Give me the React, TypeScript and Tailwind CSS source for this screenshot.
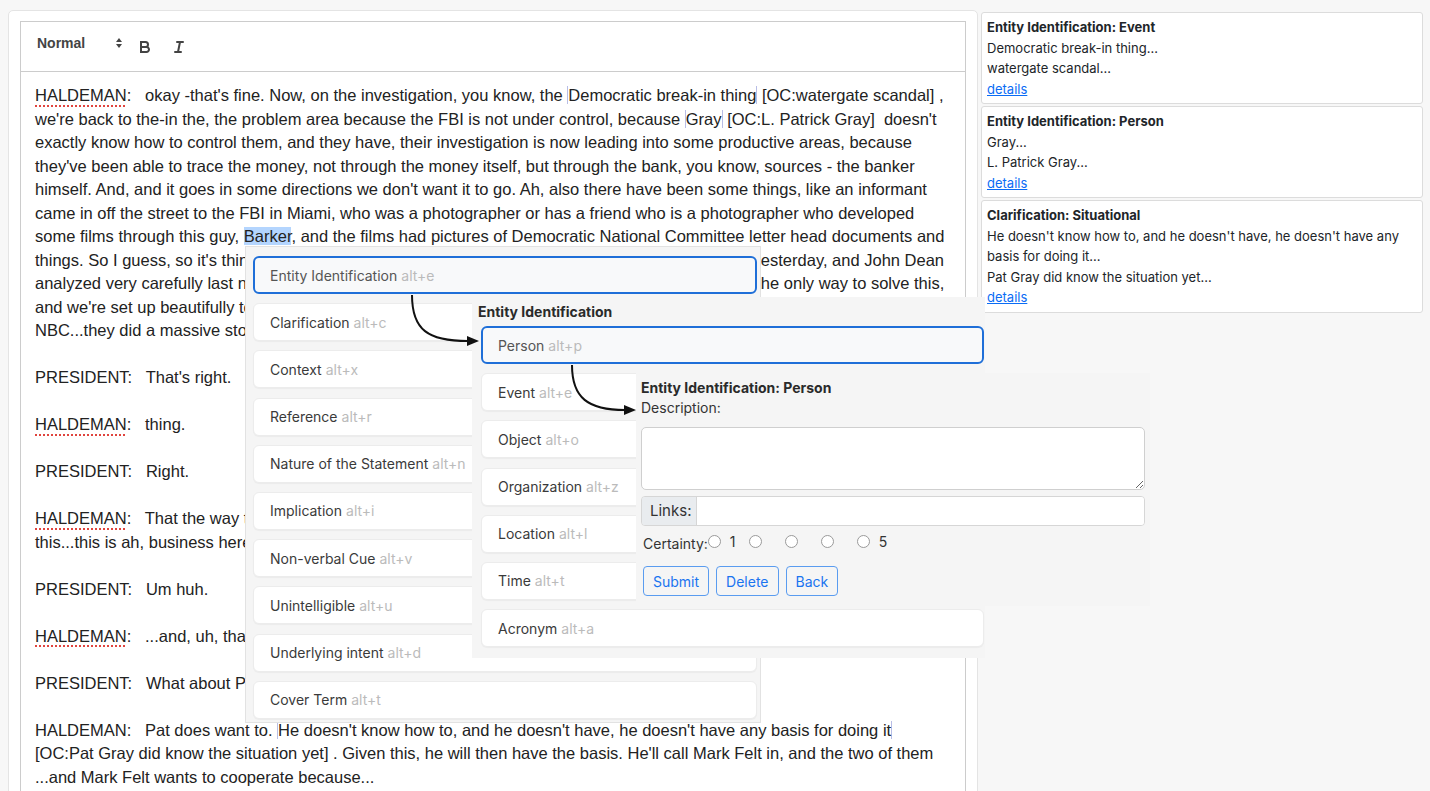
import React from "react";

const editorFont = { fontFamily: '"Liberation Sans", Arial, Helvetica, sans-serif' };
const uiFont = { fontFamily: 'Inter, "Noto Sans", "Liberation Sans", sans-serif' };

function Mark({ children }: { children: React.ReactNode }) {
  return <span className="border-x border-[#b8bde6]">{children}</span>;
}

function Speaker({ name }: { name: string }) {
  if (name === "HALDEMAN") {
    return (
      <>
        <span className="underline decoration-dotted decoration-[#e0443e] decoration-[1.5px] underline-offset-[4px]">
          HALDEMAN
        </span>
        {":   "}
      </>
    );
  }
  return <>{name + ":   "}</>;
}

const topMenu = [
  ["Entity Identification", "alt+e"],
  ["Clarification", "alt+c"],
  ["Context", "alt+x"],
  ["Reference", "alt+r"],
  ["Nature of the Statement", "alt+n"],
  ["Implication", "alt+i"],
  ["Non-verbal Cue", "alt+v"],
  ["Unintelligible", "alt+u"],
  ["Underlying intent", "alt+d"],
  ["Cover Term", "alt+t"],
];

const subMenu = [
  ["Person", "alt+p"],
  ["Event", "alt+e"],
  ["Object", "alt+o"],
  ["Organization", "alt+z"],
  ["Location", "alt+l"],
  ["Time", "alt+t"],
  ["Acronym", "alt+a"],
];

const notes = [
  {
    title: "Entity Identification: Event",
    lines: ["Democratic break-in thing...", "watergate scandal..."],
  },
  {
    title: "Entity Identification: Person",
    lines: ["Gray...", "L. Patrick Gray..."],
  },
  {
    title: "Clarification: Situational",
    lines: [
      "He doesn't know how to, and he doesn't have, he doesn't have any basis for doing it...",
      "Pat Gray did know the situation yet...",
    ],
  },
];

function MenuItem({ label, keys, active }: { label: string; keys: string; active?: boolean }) {
  return (
    <div
      className={`h-[38px] flex items-center rounded-[6px] text-[14px] ${
        active
          ? "border-2 border-[#1f6fd8] bg-[#f8f9fa] pl-[15px] text-[#555]"
          : "border border-[#ececec] bg-white pl-[16px] text-[#3a3a3a] shadow-[0_1px_1px_rgba(0,0,0,0.04)]"
      }`}
    >
      <span>{label}</span>
      <span className="ml-[4px] text-[#bbb]">{keys}</span>
    </div>
  );
}

export default function App() {
  return (
    <div className="relative h-screen w-full overflow-hidden bg-[#f7f7f7] flex items-start gap-[3px]">
      {/* editor card */}
      <div className="ml-2 mt-[10px] w-[970px] shrink-0 bg-white border border-[#e4e4e4] rounded-[5px] pt-[10px] px-[11px] pb-6">
        <div className="h-[51px] border border-[#ccc] flex items-center pl-[16px] text-[#444]" style={editorFont}>
          <span className="w-[77px] text-[14px] font-semibold mb-[7px]">Normal</span>
          <svg width="10" height="14" viewBox="0 0 10 14" className="mb-[7px]">
            <polygon points="2,6 5,2 8,6" fill="#444" />
            <polygon points="2,8 5,12 8,8" fill="#444" />
          </svg>
          <svg width="18" height="18" viewBox="0 0 18 18" className="ml-[12px]" fill="none" stroke="#444" strokeWidth="2">
            <path d="M5,4H9.5A2.5,2.5,0,0,1,12,6.5v0A2.5,2.5,0,0,1,9.5,9H5V4Z" />
            <path d="M5,9h5.5A2.5,2.5,0,0,1,13,11.5v0A2.5,2.5,0,0,1,10.5,14H5V9Z" />
          </svg>
          <svg width="18" height="18" viewBox="0 0 18 18" className="ml-[16px]" fill="none" stroke="#444" strokeWidth="2" strokeLinecap="round">
            <line x1="7" x2="13" y1="4" y2="4" />
            <line x1="5" x2="11" y1="14" y2="14" />
            <line x1="8" x2="10" y1="14" y2="4" />
          </svg>
        </div>

        <div
          className="border border-t-0 border-[#ccc] pl-[14px] pr-[15px] pt-[12px] pb-3 text-[16.5px] leading-[23.5px] text-[#222] whitespace-pre"
          style={editorFont}
        >
          <p>
            <Speaker name="HALDEMAN" />
            {"okay -that's fine. Now, on the investigation, you know, the "}
            <Mark>Democratic break-in thing</Mark>
            {" [OC:watergate scandal] ,"}
            <br />
            {"we're back to the-in the, the problem area because the FBI is not under control, because "}
            <Mark>Gray</Mark>
            {" [OC:L. Patrick Gray]  doesn't"}
            <br />
            {"exactly know how to control them, and they have, their investigation is now leading into some productive areas, because"}
            <br />
            {"they've been able to trace the money, not through the money itself, but through the bank, you know, sources - the banker"}
            <br />
            {"himself. And, and it goes in some directions we don't want it to go. Ah, also there have been some things, like an informant"}
            <br />
            {"came in off the street to the FBI in Miami, who was a photographer or has a friend who is a photographer who developed"}
            <br />
            {"some films through this guy, "}
            <span className="bg-[#b4d5fe]">Barker</span>
            {", and the films had pictures of Democratic National Committee letter head documents and"}
            <br />
            {"things. So I guess, so it's things like that that are going to be filtering in. Mitchell came up with that yesterday, and John Dean"}
            <br />
            {"analyzed very carefully last night and concludes, concurs now with Mitchell's recommendation that the only way to solve this,"}
            <br />
            {"and we're set up beautifully to do it, ah, in that and that... the only network that paid any attention to it was"}
            <br />
            {"NBC...they did a massive story on the Cuban thing."}
          </p>
          <p>{"\u00a0"}</p>
          <p>
            <Speaker name="PRESIDENT" />
            {"That's right."}
          </p>
          <p>{"\u00a0"}</p>
          <p>
            <Speaker name="HALDEMAN" />
            {"thing."}
          </p>
          <p>{"\u00a0"}</p>
          <p>
            <Speaker name="PRESIDENT" />
            {"Right."}
          </p>
          <p>{"\u00a0"}</p>
          <p>
            <Speaker name="HALDEMAN" />
            {"That the way to handle this now is for us to have Walters call Pat Gray and just say, \"Stay the hell out of"}
            <br />
            {"this...this is ah, business here we don't want you to go any further on it.\""}
          </p>
          <p>{"\u00a0"}</p>
          <p>
            <Speaker name="PRESIDENT" />
            {"Um huh."}
          </p>
          <p>{"\u00a0"}</p>
          <p>
            <Speaker name="HALDEMAN" />
            {"...and, uh, that would take care of it."}
          </p>
          <p>{"\u00a0"}</p>
          <p>
            <Speaker name="PRESIDENT" />
            {"What about Pat Gray, ah, you mean he doesn't want to?"}
          </p>
          <p>{"\u00a0"}</p>
          <p>
            {"HALDEMAN:   Pat does want to. "}
            <Mark>He doesn't know how to, and he doesn't have, he doesn't have any basis for doing it</Mark>
            <br />
            {"[OC:Pat Gray did know the situation yet] . Given this, he will then have the basis. He'll call Mark Felt in, and the two of them"}
            <br />
            {"...and Mark Felt wants to cooperate because..."}
          </p>
        </div>
      </div>

      {/* annotation list */}
      <div className="mt-[12px] w-[442px] shrink-0 flex flex-col gap-[2px] text-[13px] leading-[20.5px] text-[#212529]" style={uiFont}>
        {notes.map((n) => (
          <div key={n.title} className="bg-white border border-[#dcdcdc] rounded-[3px] px-[5px] pt-[4px] pb-[4px]">
            <div className="font-bold">{n.title}</div>
            {n.lines.map((l) => (
              <div key={l}>{l}</div>
            ))}
            <a href="#" className="text-[#0a6cf5] underline">
              details
            </a>
          </div>
        ))}
      </div>

      {/* category menu */}
      <div
        className="absolute left-[245px] top-[246px] w-[516px] h-[477px] bg-[#f5f5f5] border border-[#e2e2e2] pl-[7px] pr-[3px] pt-[9px] flex flex-col gap-[9.2px]"
        style={uiFont}
      >
        {topMenu.map(([l, k], i) => (
          <MenuItem key={l} label={l} keys={k} active={i === 0} />
        ))}
      </div>

      {/* sub menu */}
      <div className="absolute left-[472px] top-[297px] w-[513px] h-[361px] bg-[#f5f5f5] pl-[9px] pr-[1px]" style={uiFont}>
        <div className="-ml-[3px] pt-[4px] h-[29px] text-[14px] font-bold text-[#2a2a2a]">Entity Identification</div>
        <div className="flex flex-col gap-[9.2px]">
          {subMenu.map(([l, k], i) => (
            <MenuItem key={l} label={l} keys={k} active={i === 0} />
          ))}
        </div>
      </div>

      {/* detail form */}
      <div className="absolute left-[636px] top-[373px] w-[514px] h-[233px] bg-[#f5f5f5] pl-[5px] pr-[5px] pt-[5px] text-[#333]" style={uiFont}>
        <div className="text-[14px] font-bold leading-[20px] text-[#2a2a2a]">Entity Identification: Person</div>
        <div className="text-[14px] leading-[20px]">Description:</div>
        <textarea className="mt-[9px] block w-full h-[63px] rounded-[5px] border border-[#cfcfcf] bg-white resize-y" />
        <div className="mt-[6px] flex h-[30px] rounded-[4px] border border-[#d6d6d6] overflow-hidden">
          <span className="w-[55px] bg-[#e9ecef] border-r border-[#d6d6d6] flex items-center pl-[8px] text-[15px] text-[#333]">
            Links:
          </span>
          <input className="flex-1 bg-white outline-none" />
        </div>
        <div className="mt-[5px] flex items-center h-[20px] pl-[2px] text-[14px]">
          <span className="mt-[4px]">Certainty:</span>
          {["1", "", "", "", "5"].map((v, i) => (
            <label key={i} className={`flex items-center ${i === 0 ? "w-[41px]" : i < 4 ? "w-[36px]" : ""}`}>
              <input
                type="radio"
                name="certainty"
                className="appearance-none w-[13px] h-[13px] rounded-full border border-[#9a9a9a] bg-white"
              />
              {v && <span className="ml-[9px] text-[14px] text-[#333]">{v}</span>}
            </label>
          ))}
        </div>
        <div className="mt-[15px] flex gap-[7px] pl-[2px]">
          {["Submit", "Delete", "Back"].map((b) => (
            <button
              key={b}
              className="h-[30px] px-[9px] rounded-[4px] border border-[#5a9cf0] bg-transparent text-[14px] text-[#1a74f0]"
            >
              {b}
            </button>
          ))}
        </div>
      </div>

      {/* connector arrows */}
      <svg className="absolute left-0 top-0 pointer-events-none" width="1430" height="791">
        <path d="M412 295 C 412 330, 428 341, 468 341" fill="none" stroke="#111" strokeWidth="2" />
        <polygon points="479,341 467,336 467,346" fill="#111" />
        <path d="M572 365 C 572 398, 588 410, 625 410" fill="none" stroke="#111" strokeWidth="2" />
        <polygon points="636,410 624,405 624,415" fill="#111" />
      </svg>
    </div>
  );
}
